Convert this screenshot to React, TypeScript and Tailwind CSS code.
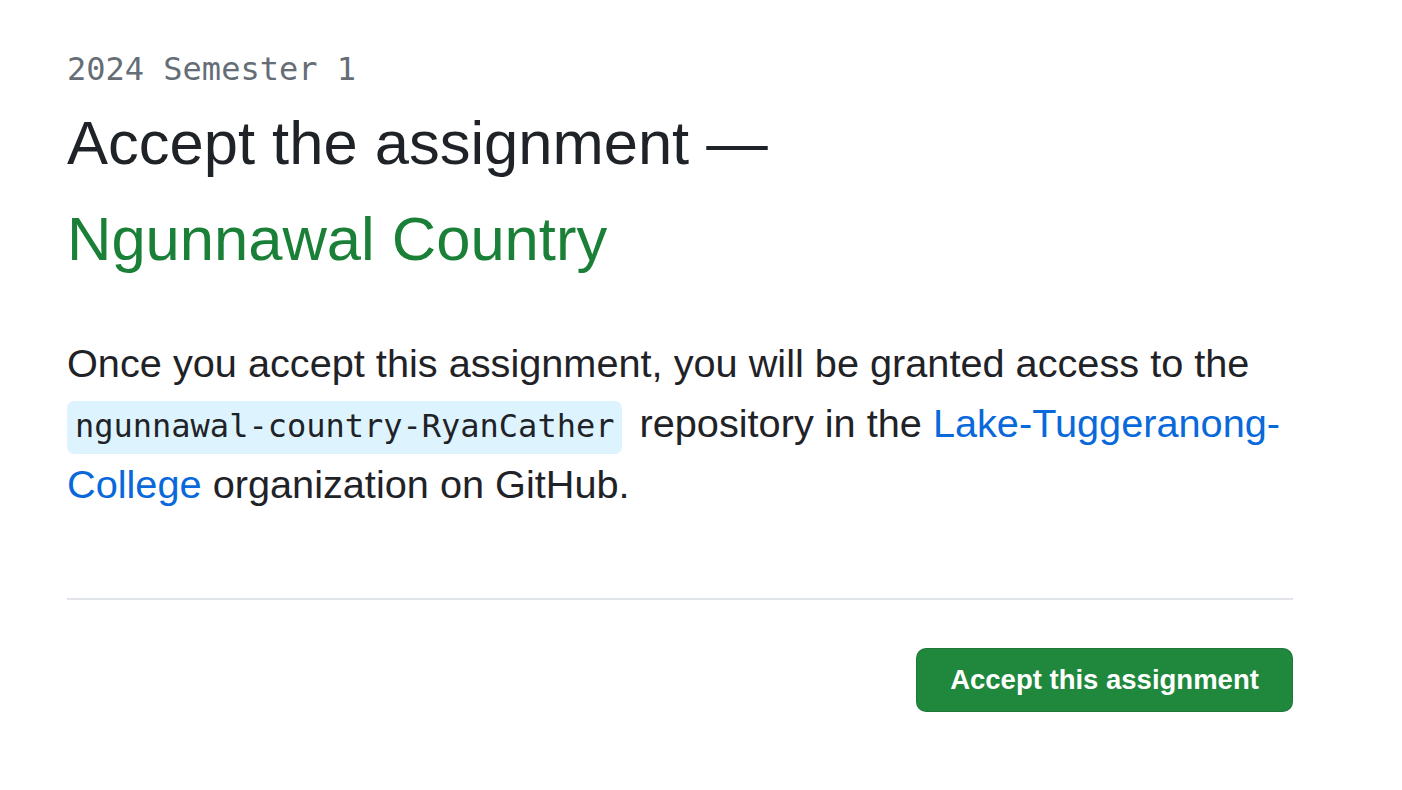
export default function App() {
  return (
    <div className="min-h-screen bg-white pl-[67px] pt-[47px] font-['Liberation_Sans',Arial,sans-serif] text-[#1f2328]">
      <div className="w-[1226px]">
        <p className="font-['DejaVu_Sans_Mono',monospace] text-[32px] leading-[44px] text-[#656d76]">2024 Semester 1</p>

        <h1 className="mt-[4px] text-[61.5px] leading-[96px] font-normal">
          <span className="block">Accept the assignment —</span>
          <span className="block text-[#1a7f37]">Ngunnawal Country</span>
        </h1>

        <p className="mt-[46px] text-[39.7px] leading-[60px]">
          Once you accept this assignment, you will be granted access to the{' '}
          <code className="mr-[6px] inline-block h-[53px] rounded-[7px] bg-[#ddf4ff] px-[8px] font-['DejaVu_Sans_Mono',monospace] text-[32px] leading-[50px]">
            ngunnawal-country-RyanCather
          </code>{' '}
          repository in the{' '}
          <a href="#" className="text-[#0969da]">
            Lake-Tuggeranong-College
          </a>{' '}
          organization on GitHub.
        </p>

        <div className="mt-[84px] h-[2px] bg-[#e1e4e8]" />

        <div className="mt-[48px] flex justify-end">
          <button className="flex h-16 w-[377px] items-center justify-center rounded-[10px] border border-[#1f232826] bg-[#1f883d] text-[27.5px] font-semibold text-white">
            Accept this assignment
          </button>
        </div>
      </div>
    </div>
  )
}
